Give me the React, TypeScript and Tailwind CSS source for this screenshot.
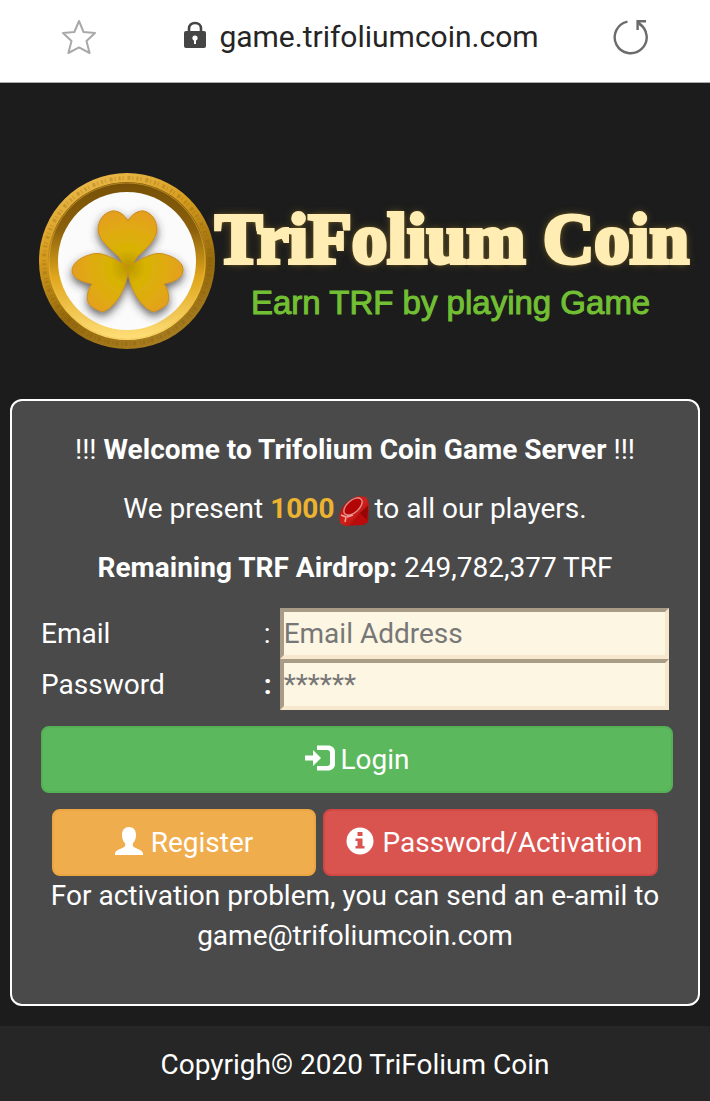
import { useState } from 'react';
import type { FormEvent, ReactNode } from 'react';

function StarIcon() {
  return (
    <svg className="h-9 w-9" viewBox="0 0 36 36" fill="none" stroke="#a9a9a9" strokeWidth="2" strokeLinejoin="round">
      <path d="M18 2 22.600 13 34 14 25.500 22 28.600 34 18 28.400 7.400 34 10.500 22 2 14 13.400 13Z" />
    </svg>
  );
}

function LockIcon() {
  return (
    <svg className="mb-1 h-7 w-6" viewBox="0 0 24 28">
      <path d="M6 11V7.500C6 4 8.500 2 12 2s6 2 6 5.500V11" fill="none" stroke="#454545" strokeWidth="2.600" />
      <rect x="1" y="10" width="22" height="17" rx="2" fill="#454545" />
      <circle cx="12" cy="17" r="2.600" fill="#fff" />
      <path d="M11 18h2v5h-2z" fill="#fff" />
    </svg>
  );
}

function ReloadIcon() {
  return (
    <svg className="h-9 w-9" viewBox="0 0 36 36" fill="none" stroke="#6b6b6b" strokeWidth="2.400">
      <path d="M14.500 2.600A16 16 0 1 0 26 4.600" />
      <path d="M24.600 11V2.200H33" />
      <path d="M24.500 2.500 29.500 7.500" />
    </svg>
  );
}

function CoinLogo() {
  return (
    <svg className="h-44 w-44 shrink-0" viewBox="0 0 176 176" role="img" aria-label="TriFolium coin">
      <defs>
        <linearGradient id="rim" x1="0.2" y1="0" x2="0.6" y2="1">
          <stop offset="0" stopColor="#edbd50" />
          <stop offset="0.35" stopColor="#d79d1e" />
          <stop offset="0.7" stopColor="#94690c" />
          <stop offset="1" stopColor="#a77d20" />
        </linearGradient>
        <linearGradient id="bevel" x1="0" y1="0" x2="0" y2="1">
          <stop offset="0" stopColor="#765006" />
          <stop offset="0.3" stopColor="#8b600c" />
          <stop offset="0.6" stopColor="#e0a61c" />
          <stop offset="1" stopColor="#ffe07b" />
        </linearGradient>
        <radialGradient id="leaf" gradientUnits="userSpaceOnUse" cx="89" cy="94" r="60">
          <stop offset="0" stopColor="#b99700" />
          <stop offset="0.3" stopColor="#d8b302" />
          <stop offset="0.65" stopColor="#e0aa12" />
          <stop offset="1" stopColor="#e59c22" />
        </radialGradient>
        <filter id="leafShadow" x="-20%" y="-20%" width="140%" height="150%">
          <feDropShadow dx="0" dy="4" stdDeviation="4" floodColor="#333" floodOpacity="0.75" />
        </filter>
      </defs>
      <circle cx="88" cy="88" r="88" fill="url(#rim)" />
      <circle cx="88" cy="88" r="83" fill="none" stroke="#79530a" strokeWidth="4" strokeDasharray="1 3 2 2 1 4 3 2" opacity="0.25" />
      <circle cx="88" cy="88" r="79" fill="url(#bevel)" />
      <circle cx="88" cy="88" r="78" fill="none" stroke="#f0bd3f" strokeWidth="1" opacity="0.5" />
      <circle cx="88" cy="88" r="69" fill="#fbfbfc" />
      <g filter="url(#leafShadow)" fill="url(#leaf)" stroke="#cc8d1c" strokeWidth="1">
        <path d="M89 48C86 42 79 37 73 38C64 40 59 48 59 57C60 68 72 76 80 84L87 96H91L98 84C106 76 117 68 118 57C118 48 113 40 105 38C99 37 92 42 89 48Z" />
        <path d="M90 92L84 91C78 87 72 84 66 82C61 80 55 80 50 82C40 85 33 91 33 98C34 106 44 109 53 111C48 117 47 127 50 131C54 136 60 137 63 139C74 136 87 119 89 98Z" />
        <path d="M88 92L94 91C100 87 106 84 112 82C117 80 123 80 128 82C138 85 145 91 144 98C143 106 134 109 125 111C130 117 131 127 128 131C124 136 118 137 115 139C104 136 91 119 89 98Z" />
      </g>
    </svg>
  );
}

function RubyIcon() {
  return (
    <svg className="mx-1 inline h-8 w-8 align-middle" viewBox="0 0 32 32" aria-hidden="true">
      <defs>
        <linearGradient id="ruby" x1="0" y1="0" x2="1" y2="1">
          <stop offset="0" stopColor="#a00808" />
          <stop offset="0.5" stopColor="#d3201a" />
          <stop offset="1" stopColor="#8e0606" />
        </linearGradient>
      </defs>
      <path d="M1 22C2 12 11 3 21 1L28 2L31 9L30 27L25 30L7 31L2 28Z" fill="url(#ruby)" />
      <path d="M12 30 22 18 30 11V27L25 30Z" fill="#b90b0b" />
      <path d="M22 18 30 11 29 25Z" fill="#940505" />
      <ellipse cx="15" cy="11.500" rx="11" ry="6" transform="rotate(-42 15 11.500)" fill="#b30505" stroke="#dd8a85" strokeWidth="1.500" />
      <path d="M3 20 8 22 7 27M9 22 15 20" fill="none" stroke="#f0a49e" strokeWidth="1.500" />
    </svg>
  );
}

function LoginIcon() {
  return (
    <svg className="mb-1 h-7 w-8" viewBox="0 0 32 28" fill="#fff" aria-hidden="true">
      <path d="M1 11.500H9V6L17 14L9 22V16.500H1Z" />
      <path d="M13 1.500H24C28 1.500 31 4 31 8V20C31 24 28 26.500 24 26.500H13V22H23C25 22 26 21 26 19.500V8.500C26 7 25 6 23 6H13Z" />
    </svg>
  );
}

function UserIcon() {
  return (
    <svg className="mb-1 h-7 w-7" viewBox="0 0 28 28" fill="#fff" aria-hidden="true">
      <path d="M14 0C18.500 0 21 3 21 8C21 12 19.500 14.500 17.800 16.500V19C19 21 27 22.500 28 26V28H0V26C1 22.500 9 21 10.200 19V16.500C8.500 14.500 7 12 7 8C7 3 9.500 0 14 0Z" />
    </svg>
  );
}

function InfoIcon() {
  return (
    <svg className="mb-1 h-7 w-7" viewBox="0 0 28 28" aria-hidden="true">
      <circle cx="14" cy="14" r="13.500" fill="#fff" />
      <path d="M11.500 5H16.500V9H11.500ZM9.500 11.500H16.500V19H18.500V21.500H9.500V19H11.500V14H9.500Z" fill="#d9534f" />
    </svg>
  );
}

type FieldProps = {
  id: string;
  label: string;
  colon: ReactNode;
  type: string;
  placeholder: string;
  value: string;
  onChange: (value: string) => void;
};

function Field({ id, label, colon, type, placeholder, value, onChange }: FieldProps) {
  return (
    <div className="flex h-[51px] items-center">
      <label htmlFor={id} className="flex-1">
        {label}
      </label>
      <span className="w-4">{colon}</span>
      <input
        id={id}
        type={type}
        placeholder={placeholder}
        value={value}
        onChange={(event) => onChange(event.target.value)}
        className="h-full w-[62%] rounded-none border-4 border-t-[#a99c86] border-r-[#f7e8cd] border-b-[#f7e8cd] border-l-[#a99c86] bg-[#fcf6e2] text-black outline-none placeholder:text-[#777]"
      />
    </div>
  );
}

export default function App() {
  const [email, setEmail] = useState('');
  const [password, setPassword] = useState('');

  const handleSubmit = (event: FormEvent) => {
    event.preventDefault();
  };

  return (
    <div className="flex min-h-screen flex-col bg-[#1c1c1c] font-['Roboto',sans-serif] text-[28px] leading-10 text-white">
      <header className="flex h-[83px] items-center justify-between border-b border-[#aaa] bg-white px-[61px] pb-2 text-[#252525]">
        <button type="button" aria-label="Bookmark">
          <StarIcon />
        </button>
        <div className="flex items-center gap-3 pl-3">
          <LockIcon />
          <span className="text-[30px]">game.trifoliumcoin.com</span>
        </div>
        <button type="button" aria-label="Reload">
          <ReloadIcon />
        </button>
      </header>

      <main className="flex-1 px-[10px] pb-5">
        <div className="flex pt-[90px] pb-[50px] pl-[29px]">
          <CoinLogo />
          <div className="flex flex-1 flex-col pt-8 whitespace-nowrap">
            <h1 className="font-['Liberation_Serif',serif] text-[71px] leading-[68px] font-bold text-[#ffedb3] [-webkit-text-stroke:4px_#ffedb3] [text-shadow:0_0_4px_#a67c13,0_0_10px_#77672f]">
              TriFolium Coin
            </h1>
            <p className="pl-9 font-['Liberation_Sans',sans-serif] text-[33px] leading-[60px] text-[#72bf34] [-webkit-text-stroke:1px_#72bf34]">
              Earn TRF by playing Game
            </p>
          </div>
        </div>

        <section className="rounded-xl border-2 border-white bg-[#4a4a4a] pt-[29px] pb-12">
          <div className="space-y-[19px] text-center">
            <p>
              !!! <b>Welcome to Trifolium Coin Game Server</b> !!!
            </p>
            <p className="h-10">
              We present <b className="text-[#ecb331]">1000</b>
              <RubyIcon />
              to all our players.
            </p>
            <p>
              <b>Remaining TRF Airdrop:</b> 249,782,377 TRF
            </p>
          </div>

          <form className="mt-5 mr-[25px] ml-[29px]" onSubmit={handleSubmit}>
            <div className="mr-1">
              <Field
                id="email"
                label="Email"
                colon=":"
                type="email"
                placeholder="Email Address"
                value={email}
                onChange={setEmail}
              />
              <Field
                id="password"
                label="Password"
                colon={<b>:</b>}
                type="password"
                placeholder="******"
                value={password}
                onChange={setPassword}
              />
            </div>

            <button
              type="submit"
              className="mt-4 flex h-[67px] w-full items-center justify-center gap-1 rounded-lg border-2 border-[#55b055] bg-[#5cb85c]"
            >
              <LoginIcon />
              Login
            </button>
          </form>

          <div className="mx-10 mt-4 grid grid-cols-[264fr_335fr] gap-[7px]">
            <button
              type="button"
              className="flex h-[67px] items-center justify-center gap-2 rounded-lg border-2 border-[#eca641] bg-[#f0ad4e]"
            >
              <UserIcon />
              Register
            </button>
            <button
              type="button"
              className="flex h-[67px] items-center justify-center gap-2 rounded-lg border-2 border-[#d24743] bg-[#d9534f] pl-2"
            >
              <InfoIcon />
              Password/Activation
            </button>
          </div>

          <p className="px-8 text-center">
            For activation problem, you can send an e-amil to game@trifoliumcoin.com
          </p>
        </section>
      </main>

      <footer className="bg-[#262626] pt-[19px] pb-4 text-center">Copyrigh© 2020 TriFolium Coin</footer>
    </div>
  );
}
